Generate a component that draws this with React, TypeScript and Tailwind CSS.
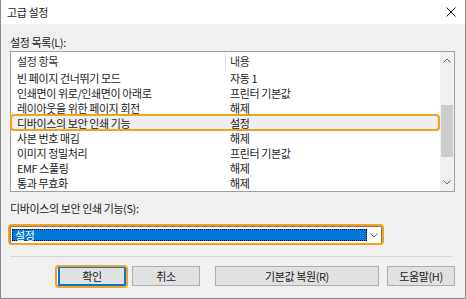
import React from 'react';

// advanced settings dialog (printer driver)
const rows: [string, string][] = [
  ["빈 페이지 건너뛰기 모드", "자동 1"],
  ["인쇄면이 위로/인쇄면이 아래로", "프린터 기본값"],
  ["레이아웃을 위한 페이지 회전", "해제"],
  ["디바이스의 보안 인쇄 기능", "설정"],
  ["사본 번호 매김", "해제"],
  ["이미지 정밀처리", "프린터 기본값"],
  ["EMF 스풀링", "해제"],
  ["통과 무효화", "해제"],
];

const selectedIndex = 3;

const Chevron = ({ up }: { up?: boolean }) => (
  <svg width="8" height="5" viewBox="0 0 8 5" fill="none">
    <path d={up ? "M0.5 4.5 L4 1 L7.5 4.5" : "M0.5 0.5 L4 4 L7.5 0.5"} stroke="#606060" strokeWidth="1" />
  </svg>
);

const Annotation = ({ className }: { className: string }) => (
  <span className={`pointer-events-none absolute border-2 border-[#f4a11d] rounded-[4px] ${className}`} />
);

export default function App() {
  return (
    <div className="w-[466px] h-[299px] flex flex-col overflow-hidden border-x border-b border-[#8a8a8a] bg-[#f0f0f0] text-[11px] tracking-[-0.4px] text-[#1a1a1a] font-['Noto_Sans_CJK_KR',sans-serif]">
      {/* title bar */}
      <div className="h-[24px] shrink-0 bg-white flex items-center justify-between pl-[6px] pr-[9px]">
        <span className="leading-[14px]">고급 설정</span>
        <svg width="10" height="10" viewBox="0 0 10 10" fill="none">
          <path d="M0.5 0.5 L9.5 9.5 M9.5 0.5 L0.5 9.5" stroke="#111" strokeWidth="1" />
        </svg>
      </div>

      <div className="flex-1 flex flex-col pl-[9px] pr-[10px]">
        <div className="mt-[11px] h-[14px] leading-[14px]">설정 목록(L):</div>

        {/* list view */}
        <div className="mt-[2px] w-[445px] h-[141px] shrink-0 border border-[#a0a0a0] bg-white flex">
          <div className="flex-1 flex flex-col">
            <div className="h-[19px] flex leading-[19px] text-[#333]">
              <div className="w-[214px] pl-[6px]">설정 항목</div>
              <div className="w-px bg-[#e5e5e5]" />
              <div className="pl-[4px]">내용</div>
            </div>
            {rows.map(([name, value], i) => (
              <div
                key={name}
                className={`relative h-[15px] flex leading-[15px] ${i === selectedIndex ? 'bg-[#efefef]' : ''}`}
              >
                <div className="w-[214px] pl-[6px] whitespace-nowrap">{name}</div>
                <div className="pl-[5px] whitespace-nowrap">{value}</div>
                {i === selectedIndex && <Annotation className="-left-[1px] right-0 -top-[2px] bottom-0" />}
              </div>
            ))}
          </div>
          {/* scrollbar */}
          <div className="w-[14px] bg-[#f0f0f0] flex flex-col items-center">
            <div className="h-[17px] flex items-center justify-center"><Chevron up /></div>
            <div className="mt-[36px] w-[12px] h-[52px] bg-[#cdcdcd]" />
            <div className="flex-1" />
            <div className="h-[17px] flex items-center justify-center"><Chevron /></div>
          </div>
        </div>

        <div className="mt-[9px] h-[14px] leading-[14px]">디바이스의 보안 인쇄 기능(S):</div>

        {/* combo box */}
        <div className="relative mt-[11px] w-[372px] h-[18px] shrink-0 border border-[#7a7a7a] bg-white flex items-center">
          <div className="ml-[1px] w-[355px] h-[12px] bg-[#0078d7] border border-dotted border-black text-white leading-[10px] pl-[2px]">
            설정
          </div>
          <div className="flex-1 flex items-center justify-center"><Chevron /></div>
          <Annotation className="-left-[3px] -right-[3px] -top-[3px] -bottom-[2px]" />
        </div>

        <div className="mt-[12px] w-[443px] h-px bg-[#d5d5d5]" />

        {/* buttons */}
        <div className="mt-[9px] flex h-[20px]">
          <button className="relative ml-[48px] w-[68px] h-[20px] bg-[#e1e1e1] border-2 border-[#0078d7] leading-none">
            확인
            <Annotation className="-left-[5px] -right-[4px] -top-[3px] -bottom-[4px]" />
          </button>
          <button className="ml-[6px] w-[68px] h-[20px] bg-[#e1e1e1] border border-[#adadad] leading-none">취소</button>
          <button className="ml-[15px] w-[164px] h-[20px] bg-[#e1e1e1] border border-[#adadad] leading-none">기본값 복원(R)</button>
          <button className="ml-[8px] w-[68px] h-[20px] bg-[#e1e1e1] border border-[#adadad] leading-none">도움말(H)</button>
        </div>
      </div>
    </div>
  );
}
